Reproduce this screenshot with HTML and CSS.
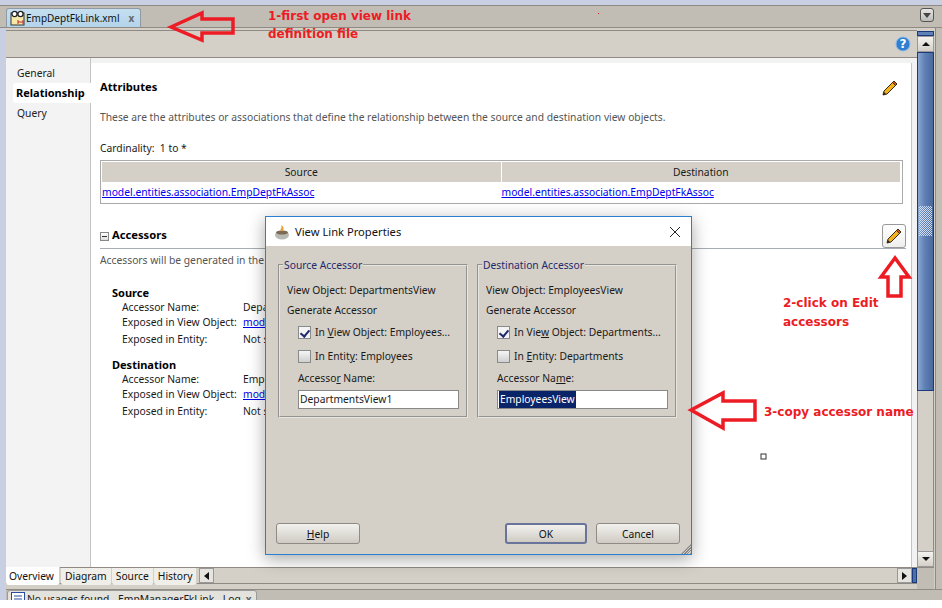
FILE: index.html
```html
<!DOCTYPE html>
<html lang="en">
<head>
  <meta charset="UTF-8" />
  <title>EmpDeptFkLink.xml</title>
  <link rel="stylesheet" href="styles.css">
</head>
<body>
  <div class="frame">
    <div class="tabbar">
      <div class="file-tab">
        <svg class="file-icon" width="16" height="16" viewBox="0 0 16 16">
          <rect x="1" y="3" width="13" height="12" fill="#f6e9a8" stroke="#333"/>
          <circle cx="4.5" cy="4" r="2.6" fill="#fff" stroke="#222" stroke-width="1.3"/>
          <circle cx="10.5" cy="4" r="2.6" fill="#fff" stroke="#222" stroke-width="1.3"/>
          <path d="M8 12h5M8 10v4M13 10v4" stroke="#c0272d" fill="none"/>
        </svg>
        <span>EmpDeptFkLink.xml</span>
        <span class="tab-close">x</span>
      </div>
      <div class="tab-menu"></div>
    </div>

    <div class="work">
      <div class="editor">
        <div class="toolbar">
          <svg width="16" height="16" viewBox="0 0 16 16">
            <circle cx="8" cy="8" r="7" fill="#2f7fd0" stroke="#8ab8e8"/>
            <text x="8" y="12" text-anchor="middle" class="help-mark">?</text>
          </svg>
        </div>
        <div class="panes">
          <div class="side-nav">
            <div class="nav-item">General</div>
            <div class="nav-item active">Relationship</div>
            <div class="nav-item">Query</div>
          </div>
          <div class="content">
            <div class="section-head first">
              <h3>Attributes</h3>
              <svg class="pencil" width="18" height="18" viewBox="0 0 18 18"><use href="#pencil"/></svg>
            </div>
            <p class="desc">These are the attributes or associations that define the relationship between the source and destination view objects.</p>
            <p class="cardinality">Cardinality:&nbsp; 1 to *</p>
            <table class="assoc-table">
              <thead>
                <tr><th>Source</th><th>Destination</th></tr>
              </thead>
              <tbody>
                <tr>
                  <td><a href="#">model.entities.association.EmpDeptFkAssoc</a></td>
                  <td><a href="#">model.entities.association.EmpDeptFkAssoc</a></td>
                </tr>
              </tbody>
            </table>
            <div class="section-head accessors">
              <span class="collapse"></span>
              <h3>Accessors</h3>
              <button class="edit-btn">
                <svg width="18" height="18" viewBox="0 0 18 18"><use href="#pencil"/></svg>
              </button>
            </div>
            <p class="desc acc-desc">Accessors will be generated in the view objects.</p>

            <h4>Source</h4>
            <dl class="props">
              <dt>Accessor Name:</dt><dd>DepartmentsView</dd>
              <dt>Exposed in View Object:</dt><dd><a href="#">model.views.DepartmentsView</a></dd>
              <dt>Exposed in Entity:</dt><dd>Not selected</dd>
            </dl>
            <h4>Destination</h4>
            <dl class="props">
              <dt>Accessor Name:</dt><dd>EmployeesView</dd>
              <dt>Exposed in View Object:</dt><dd><a href="#">model.views.EmployeesView</a></dd>
              <dt>Exposed in Entity:</dt><dd>Not selected</dd>
            </dl>
          </div>
          <div class="pane-edge"></div>
        </div>
        <div class="bottom-tabs">
          <div class="btab on">Overview</div>
          <div class="btab">Diagram</div>
          <div class="btab">Source</div>
          <div class="btab">History</div>
          <div class="hbtn"><i class="tri-left"></i></div>
          <div class="htrack"></div>
          <div class="hbtn"><i class="tri-right"></i></div>
          <div class="hthumb"></div>
        </div>
      </div>
      <div class="vscroll">
        <div class="cap"></div>
        <div class="vbtn"><i class="tri-up"></i></div>
        <div class="thumb"><div class="grip"></div></div>
        <div class="vtrack"></div>
        <div class="vbtn"><i class="tri-down"></i></div>
        <div class="corner"></div>
      </div>
      <div class="far-edge"></div>
    </div>

    <div class="log-bar">
      <div class="log-tab">
        <svg width="15" height="14" viewBox="0 0 15 14">
          <rect x="0.5" y="0.5" width="13" height="13" fill="#fff" stroke="#2a4c9c"/>
          <path d="M3 4h8M3 7h8M3 10h8" stroke="#2a4c9c"/>
        </svg>
        <span>No usages found - EmpManagerFkLink - Log</span>
        <span class="tab-close">x</span>
      </div>
    </div>
  </div>

  <!-- shared pencil -->
  <svg class="defs" width="0" height="0">
    <symbol id="pencil" viewBox="0 0 18 18">
      <path d="M2 16l1-4L13 2l3 3L6 15z" fill="#f2b01e" stroke="#3a2a10"/>
      <path d="M13 2l3 3-1.5 1.5-3-3z" fill="#d2561a" stroke="#3a2a10"/>
      <path d="M2 16l1-3 2 2z" fill="#222"/>
    </symbol>
  </svg>

  <div class="dialog">
    <div class="dialog-title">
      <svg width="18" height="18" viewBox="0 0 18 18">
        <ellipse cx="8" cy="12" rx="7" ry="4.5" fill="#b9b9b4"/>
        <ellipse cx="8" cy="9.5" rx="6" ry="2" fill="#7b6a55"/>
        <path d="M7 8c-2-2 2-3 0-6 3 1 3 4 2 6z" fill="#e9a23b"/>
      </svg>
      <span class="dialog-name">View Link Properties</span>
      <svg class="dialog-x" width="12" height="12" viewBox="0 0 12 12">
        <path d="M1 1l10 10M11 1L1 11" stroke="#222" fill="none"/>
      </svg>
    </div>
    <div class="dialog-body">
      <div class="groups">
        <fieldset class="group">
          <legend>Source Accessor</legend>
          <div class="line">View Object: DepartmentsView</div>
          <div class="line gen">Generate Accessor</div>
          <label class="check first-check"><span class="box ticked"></span><span>In <u>V</u>iew Object: Employees...</span></label>
          <label class="check"><span class="box"></span><span>In Entit<u>y</u>: Employees</span></label>
          <div class="acc-label">Accesso<u>r</u> Name:</div>
          <div class="field">DepartmentsView1</div>
        </fieldset>
        <fieldset class="group dest">
          <legend>Destination Accessor</legend>
          <div class="line">View Object: EmployeesView</div>
          <div class="line gen">Generate Accessor</div>
          <label class="check first-check"><span class="box ticked"></span><span>In Vie<u>w</u> Object: Departments...</span></label>
          <label class="check"><span class="box"></span><span>In <u>E</u>ntity: Departments</span></label>
          <div class="acc-label">Accessor Na<u>m</u>e:</div>
          <div class="field"><span class="selected">EmployeesView</span></div>
        </fieldset>
      </div>
      <div class="dialog-buttons">
        <button class="btn"><u>H</u>elp</button>
        <span class="spacer"></span>
        <button class="btn default">OK</button>
        <button class="btn">Cancel</button>
      </div>
    </div>
    <div class="resize"></div>
  </div>

  <!-- annotations drawn on top of the screenshot -->
  <svg class="marks" width="942" height="608" viewBox="0 0 942 608">
    <path d="M171 27L202 13V19H233V33H202V40z"/>
    <path d="M895 258L881 277H888V296H901V277H909z"/>
    <path d="M691 410L723 393V401H755V420H723V428z"/>
    <rect class="cursor" x="761" y="454" width="5" height="5"/>
    <rect class="dot" x="598" y="13" width="1" height="1"/>
  </svg>
  <div class="note note-1">1-first open view link<br>definition file</div>
  <div class="note note-2">2-click on Edit<br>accessors</div>
  <div class="note note-3">3-copy accessor name</div>
</body>
</html>
```

FILE: styles.css
```css
* { margin:0; padding:0; box-sizing:border-box; }
body {
  background:white;
  width:942px;
  height:608px;
  overflow:hidden;
  font-family:"Noto Sans",sans-serif;
  font-size:10.3px;
  color:#1a1a1a;
}
a { color:#0000ee; }
.defs { position:absolute; }

.frame {
  height:600px;
  padding:5px 0 0 6px;
  background:#c8cfe2;
  display:flex;
  flex-direction:column;
  overflow:hidden;
}
.tabbar {
  height:23px;
  flex:none;
  margin-left:-6px;
  padding-left:6px;
  background:#c1bcb4;
  border-top:1px solid #8f8b84;
  border-bottom:1px solid #8f8b84;
  display:flex;
  justify-content:space-between;
  align-items:flex-end;
}
.file-tab {
  width:135px;
  height:19px;
  background:linear-gradient(#c5dff0,#b4d4ea);
  border:1px solid #8f9aa5;
  border-bottom:none;
  border-radius:3px 3px 0 0;
  display:flex;
  align-items:center;
  padding-left:3px;
  color:#111;
  font-size:10px;
}
.file-icon { flex:none; }
.tab-close { margin-left:9px; color:#666; font-weight:bold; font-size:10px; }
.tab-menu {
  width:14px;
  height:14px;
  margin:0 8px 5px 0;
  border:1px solid #555;
  border-radius:3px;
  background:linear-gradient(#e8e6e2,#bbb);
  position:relative;
}
.tab-menu::after {
  content:"";
  position:absolute;
  left:2px;
  top:4px;
  border:4px solid transparent;
  border-top:5px solid #444;
}

.work { flex:1; display:flex; min-height:0; background:#d4d0c8; }
.editor { width:911px; flex:none; display:flex; flex-direction:column; padding-top:2px; }
.toolbar {
  height:28px;
  flex:none;
  background:#d4d0c8;
  border-top:1px solid #8f8b84;
  border-bottom:1px solid #8f8b84;
  display:flex;
  justify-content:flex-end;
  align-items:center;
  padding-right:6px;
}
.help-mark { font:bold 12px "DejaVu Sans",sans-serif; fill:white; }
.panes { height:509px; flex:none; display:flex; background:#f2f2f2; padding-top:5px; }
.side-nav {
  width:85px;
  flex:none;
  margin-top:-5px;
  padding-top:5px;
  background:#f3f3f3;
  border-right:1px solid #c4c4c4;
}
.nav-item { height:20px; line-height:20px; padding-left:11px; color:#222; }
.nav-item.active {
  margin-left:7px;
  margin-right:-1px;
  padding-left:3px;
  background:white;
  border-radius:3px 0 0 3px;
  font-weight:bold;
  font-size:11px;
  color:#000;
  white-space:nowrap;
}
.content {
  width:821px;
  flex:none;
  background:white;
  padding:0 5px 0 9px;
  border-right:1px solid #c4c4c4;
  overflow:hidden;
}
.pane-edge { flex:1; }
.section-head { display:flex; align-items:center; position:relative; }
.section-head h3 { font-size:11.2px; line-height:14px; padding-bottom:2px; font-weight:bold; color:#000; }
.section-head.first { height:18px; margin-top:16px; justify-content:space-between; padding-right:7px; }
.desc { color:#555; line-height:16px; }
.section-head.first + .desc { margin-top:12px; }
.cardinality { margin-top:15px; line-height:16px; }
.assoc-table {
  width:803px;
  margin-top:4px;
  border:1px solid #aaa;
  border-collapse:separate;
  border-spacing:0;
  table-layout:fixed;
  padding:1px;
}
.assoc-table th { height:20px; background:#d4d0c8; font-weight:normal; border-right:1px solid white; }
.assoc-table td { height:20px; }
.section-head.accessors {
  height:29px;
  margin-top:16px;
  padding-top:4px;
  gap:3px;
  border-bottom:1px solid #a8adb5;
}
.collapse {
  width:9px;
  height:9px;
  border:1px solid #888;
  background:linear-gradient(white,#ddd);
  position:relative;
}
.collapse::after { content:""; position:absolute; left:1px; top:3px; width:5px; height:1px; background:#333; }
.edit-btn {
  margin-left:auto;
  width:24px;
  height:24px;
  border:1px solid #999;
  border-radius:3px;
  background:linear-gradient(#fff,#eee);
  display:flex;
  align-items:center;
  justify-content:center;
}
.acc-desc { margin-top:3px; }
h4 { font-size:11px; font-weight:bold; color:#000; margin:17px 0 0 12px; line-height:16px; }
h4 + .props + h4 { margin-top:10px; }
.props {
  display:grid;
  grid-template-columns:121px 1fr;
  margin:-1px 0 0 22px;
  line-height:15px;
}
.props dt, .props dd { white-space:nowrap; }
.props dt:nth-of-type(3), .props dd:nth-of-type(3) { margin-top:2px; }

.bottom-tabs {
  height:17px;
  flex:none;
  display:flex;
  background:#d4d0c8;
  border-top:1px solid #8f8b84;
  border-bottom:1px solid #8f8b84;
  align-items:flex-start;
}
.btab {
  height:17px;
  line-height:16px;
  padding:0 4px;
  background:#efeee9;
  border-right:1px solid #d4d0c8;
  border-radius:0 0 3px 3px;
  color:#111;
  position:relative;
}
.btab.on { background:white; margin-top:-1px; height:18px; padding:1px 3px 0; width:54px; margin-right:1px; }
.hbtn {
  width:15px;
  height:15px;
  background:#e6e4de;
  border:1px solid #999;
  display:flex;
  align-items:center;
  justify-content:center;
}
.btab + .hbtn { margin-left:2px; }
.htrack { flex:1; height:15px; }
.hthumb { width:5px; height:15px; background:#4d6ea6; border:1px solid #1b3a7c; }
.tri-left { border:4px solid transparent; border-left:none; border-right:5px solid #111; }
.tri-right { border:4px solid transparent; border-right:none; border-left:5px solid #111; }
.tri-up { border:4px solid transparent; border-top:none; border-bottom:4px solid #111; }
.tri-down { border:4px solid transparent; border-bottom:none; border-top:4px solid #111; }

.vscroll { width:17px; flex:none; margin-top:3px; display:flex; flex-direction:column; }
.cap { height:5px; flex:none; background:#5f81b6; border:1px solid #1b3a7c; }
.vbtn {
  height:16px;
  flex:none;
  background:linear-gradient(#f4f3ef,#d4d0c8);
  border:1px solid #999;
  display:flex;
  align-items:center;
  justify-content:center;
}
.thumb {
  height:339px;
  flex:none;
  background:linear-gradient(90deg,#8ba6cf,#5f81b6 45%,#4a679d);
  border:1px solid #1b3a7c;
  padding:153px 1px 0;
}
.grip {
  height:30px;
  background:repeating-conic-gradient(#cfdcf0 0 25%,transparent 0 50%) 0 0/2px 2px;
}
.vtrack { flex:1; background:#d4d0c8; border-left:1px solid #8f8b84; border-right:1px solid #8f8b84; }
.corner { height:22px; flex:none; background:#c1bcb4; border-top:1px solid #8f8b84; }
.far-edge { flex:1; margin-left:1px; background:#c1bcb4; border-left:1px solid #8f8b84; }

.log-bar {
  height:11px;
  flex:none;
  background:#c1bcb4;
  border-top:1px solid #8f8b84;
  padding-left:1px;
  overflow:hidden;
}
.log-tab {
  width:250px;
  height:20px;
  padding:1px 0 0 3px;
  display:flex;
  gap:1px;
  align-items:flex-start;
  background:#e4e2dc;
  border:1px solid #999;
  border-radius:3px 3px 0 0;
  white-space:nowrap;
}
.log-tab .tab-close { margin-left:4px; }

.dialog {
  position:absolute;
  left:265px;
  top:216px;
  width:427px;
  height:339px;
  border:1px solid #2b7fd0;
  background:#d4d0c8;
  box-shadow:0 4px 16px rgba(0,0,0,0.35);
  display:flex;
  flex-direction:column;
}
.dialog-title {
  height:29px;
  flex:none;
  background:white;
  display:flex;
  align-items:center;
  padding:0 10px 0 8px;
  gap:3px;
}
.dialog-name { font-size:11.2px; color:#111; }
.dialog-x { margin-left:auto; }
.dialog-body { flex:1; padding:12px 11px 10px 10px; display:flex; flex-direction:column; }
.groups { display:flex; gap:9px; padding-left:2px; }
.group {
  width:190px;
  min-width:0;
  height:160px;
  border:2px groove #e8e6e0;
  padding:0 7px 0 7px;
}
.group.dest { width:200px; }
legend { color:#1f2a6b; font-size:10.3px; padding:0 1px; margin-left:-4px; line-height:14px; }
.line { line-height:16px; margin-top:10px; }
.line.gen { margin-top:4px; }
.check { display:flex; align-items:center; gap:4px; height:16px; margin:8px 0 0 11px; white-space:nowrap; }
.check.first-check { margin-top:6px; }
.box {
  width:13px;
  height:13px;
  flex:none;
  border:1px solid #8a8a8a;
  background:linear-gradient(#f6f6f6,#cfcfcf);
  position:relative;
}
.box.ticked { background:#f4f4f4; }
.box.ticked::after {
  content:"";
  position:absolute;
  left:3px;
  top:1px;
  width:4px;
  height:7px;
  border:solid #1f2a6b;
  border-width:0 2px 2px 0;
  transform:rotate(40deg);
}
.acc-label { margin:6px 0 0 11px; line-height:16px; }
.field {
  margin:4px 0 0 11px;
  height:19px;
  background:white;
  border:1px solid #888;
  padding-left:1px;
  line-height:17px;
  white-space:nowrap;
}
.selected { background:#0a246a; color:white; display:inline-block; padding:0 1px; }
.dialog-buttons { display:flex; margin-top:auto; }
.btn {
  width:84px;
  height:21px;
  font:10.3px "Noto Sans",sans-serif;
  color:#111;
  background:linear-gradient(#f2f1ee,#cfcbc3);
  border:1px solid #8f8b84;
  border-radius:3px;
}
.btn.default { border:2px solid #68749a; width:82px; margin-right:9px; }
.spacer { flex:1; }
.resize {
  position:absolute;
  right:0;
  bottom:0;
  width:10px;
  height:10px;
  background:repeating-linear-gradient(135deg,transparent 0 1px,#888 1px 2px);
  clip-path:polygon(100% 0,100% 100%,0 100%);
}

.marks { position:absolute; left:0; top:0; pointer-events:none; }
.marks path { fill:none; stroke:#ed1c24; stroke-width:3.5; }
.cursor { fill:white; stroke:#333; }
.dot { fill:#ed1c24; }
.note {
  position:absolute;
  font:bold 12px/18px "DejaVu Sans",sans-serif;
  color:#ed1c24;
  white-space:nowrap;
}
.note-1 { left:268px; top:7px; }
.note-2 { left:783px; top:294px; line-height:19px; }
.note-3 { left:764px; top:403px; }
```
